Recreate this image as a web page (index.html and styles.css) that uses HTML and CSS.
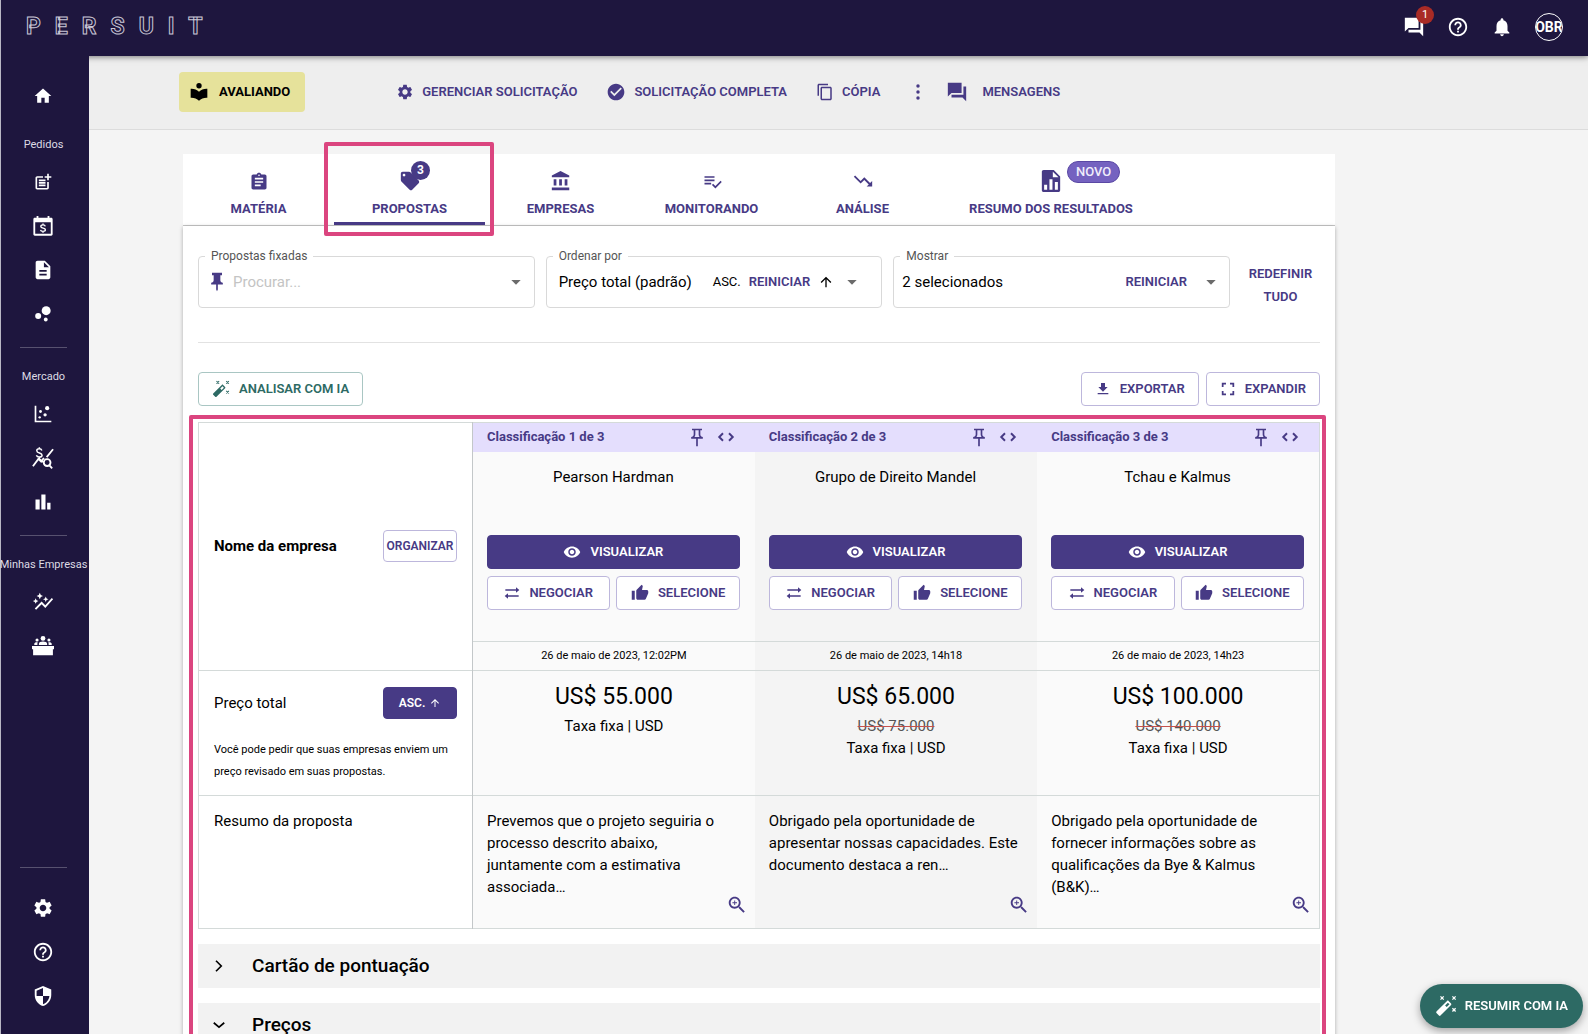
FILE: index.html
```html
<!DOCTYPE html>
<html lang="pt-BR">
<head>
<meta charset="utf-8">
<meta name="viewport" content="width=device-width, initial-scale=1">
<title>Propostas - PERSUIT</title>
<link rel="stylesheet" href="styles.css">
</head>
<body>
<svg class="sprite" aria-hidden="true">
  <symbol id="home" viewBox="0 0 24 24"><path d="M10 20v-6h4v6h5v-8h3L12 3 2 12h3v8z"/></symbol>
  <symbol id="post" viewBox="0 0 24 24"><path d="M17 19.22H5V7h7V5H5c-1.1 0-2 .9-2 2v12c0 1.1.9 2 2 2h12c1.1 0 2-.9 2-2v-7h-2v7.22zM19 2h-2v3h-3v2h3v3h2V7h3V5h-3V2zM7 9h8v2H7zM7 12h8v2H7zM7 15h8v2H7z"/></symbol>
  <symbol id="calendar" viewBox="0 0 24 24"><path d="M21 3h-2V1h-2v2H7V1H5v2H3c-.8 0-1.500.7-1.500 1.500V21c0 .8.7 1.500 1.500 1.500h18c.8 0 1.500-.7 1.500-1.500V4.500C22.500 3.700 21.800 3 21 3zm-.5 17.500h-17V8h17z"/><path fill="none" stroke="currentColor" stroke-width="1.500" d="M14.500 12.300c-.2-1-1.200-1.500-2.500-1.500s-2.400.6-2.400 1.700c0 2.600 5 1.200 5 3.600 0 1.200-1.200 1.700-2.600 1.700s-2.500-.6-2.700-1.700M12 9.300v1.500M12 17.700v1.600"/></symbol>
  <symbol id="doc" viewBox="0 0 24 24"><path d="M14 2H6c-1.100 0-2 .9-2 2v16c0 1.100.9 2 2 2h12c1.100 0 2-.9 2-2V8l-6-6zm2 16H8v-2h8v2zm0-4H8v-2h8v2zm-3-5V3.500L18.500 9H13z"/></symbol>
  <symbol id="bubbles" viewBox="0 0 24 24"><circle cx="6.200" cy="14.400" r="3.600"/><circle cx="15.300" cy="18.600" r="2.300"/><circle cx="15.800" cy="8" r="5.400"/></symbol>
  <symbol id="scatter" viewBox="0 0 24 24"><path d="M4 2H2v20h20v-2H4z"/><circle cx="9" cy="9" r="1.700"/><circle cx="17" cy="5" r="2.500"/><circle cx="14.500" cy="13" r="2"/><circle cx="8" cy="16" r="1.400"/></symbol>
  <symbol id="pricing" viewBox="0 0 24 24"><path fill="none" stroke="currentColor" stroke-width="2" d="M1 21l6-8 3 3 3-4M16 11l7-8.500"/><circle cx="16.500" cy="17" r="3.700" fill="none" stroke="currentColor" stroke-width="2"/><path fill="none" stroke="currentColor" stroke-width="2" d="M19 20l3 3.300"/><path fill="none" stroke="currentColor" stroke-width="1.600" d="M10.800 3.800C10.300 2.600 9.400 2 8 2 6.300 2 5.200 2.800 5.200 4c0 3.200 5.800 2 5.800 5 0 1.300-1.300 2-3 2s-2.800-.7-3.200-2M8 .2V2M8 11v2l5 4"/></symbol>
  <symbol id="bars" viewBox="0 0 24 24"><path d="M3 9h5v12H3zM17 13h4v8h-4zM10 3h5v18h-5z"/></symbol>
  <symbol id="autograph" viewBox="0 0 24 24"><path d="M14.060 9.940 12 9l2.060-.940L15 6l.940 2.060L18 9l-2.060.940L15 12zM4 14l.940-2.060L7 11l-2.060-.940L4 8l-.940 2.060L1 11l2.060.940zM8.500 9l1.090-2.410L12 5.500 9.590 4.410 8.500 2 7.410 4.410 5 5.500l2.410 1.090zM4.500 20.500l6-6.010 4 4L23 8.930l-1.410-1.410-7.090 7.970-4-4L3 19z"/></symbol>
  <symbol id="panel" viewBox="0 0 24 24"><circle cx="12" cy="3.800" r="2.600"/><circle cx="5.500" cy="5.500" r="1.700"/><circle cx="18.500" cy="5.500" r="1.700"/><path d="M7.500 11v-1.500c0-1.800 2-2.500 4.500-2.500s4.500.7 4.500 2.500V11zM2.500 11V9.600c0-1.200 1.300-1.900 3.800-1.700-.3.600-.4 1.100-.4 1.600V11zM21.500 11V9.600c0-1.200-1.300-1.900-3.800-1.700.3.600.4 1.100.4 1.600V11zM0 12h24v3.500h-1.200V22H1.200v-6.500H0z"/></symbol>
  <symbol id="gear" viewBox="0 0 24 24"><path d="M19.140 12.940c.04-.3.060-.61.060-.94 0-.32-.02-.64-.07-.94l2.030-1.580c.18-.14.230-.41.120-.61l-1.920-3.320c-.12-.22-.37-.29-.59-.22l-2.390.96c-.5-.38-1.030-.7-1.620-.94l-.36-2.540c-.04-.24-.24-.41-.48-.41h-3.840c-.24 0-.43.17-.47.41l-.36 2.540c-.59.24-1.130.57-1.620.94l-2.390-.96c-.22-.08-.47 0-.59.22L2.740 8.870c-.12.21-.08.47.12.61l2.030 1.580c-.05.3-.09.63-.09.94s.02.64.07.94l-2.030 1.580c-.18.14-.23.41-.12.61l1.920 3.320c.12.22.37.29.59.22l2.390-.96c.5.38 1.030.7 1.620.94l.36 2.540c.05.24.24.41.48.41h3.840c.24 0 .44-.17.47-.41l.36-2.540c.59-.24 1.130-.56 1.620-.94l2.390.96c.22.08.47 0 .59-.22l1.920-3.320c.12-.22.07-.47-.12-.61l-2.010-1.580zM12 15.600c-1.980 0-3.600-1.620-3.600-3.600s1.620-3.600 3.600-3.600 3.600 1.620 3.600 3.600-1.620 3.600-3.600 3.600z"/></symbol>
  <symbol id="help" viewBox="0 0 24 24"><path d="M11 18h2v-2h-2v2zm1-16C6.480 2 2 6.480 2 12s4.480 10 10 10 10-4.480 10-10S17.520 2 12 2zm0 18c-4.410 0-8-3.590-8-8s3.590-8 8-8 8 3.590 8 8-3.590 8-8 8zm0-14c-2.210 0-4 1.790-4 4h2c0-1.100.9-2 2-2s2 .9 2 2c0 2-3 1.750-3 5h2c0-2.250 3-2.500 3-5 0-2.210-1.790-4-4-4z"/></symbol>
  <symbol id="shield" viewBox="0 0 24 24"><path d="M12 1 3 5v6c0 5.550 3.840 10.740 9 12 5.160-1.260 9-6.450 9-12V5l-9-4zm0 11h7c-.53 4.120-3.280 7.790-7 8.940V12H5V6.300l7-3.110V12z"/></symbol>
  <symbol id="forum" viewBox="0 0 24 24"><path d="M22 6h-3v9H6v3h12l4 4zM17 2H2v15l4-4h11z"/></symbol>
  <symbol id="bell" viewBox="0 0 24 24"><path d="M12 22c1.100 0 2-.9 2-2h-4c0 1.100.9 2 2 2zm6-6v-5c0-3.070-1.640-5.640-4.500-6.320V4c0-.83-.67-1.500-1.500-1.500s-1.500.67-1.500 1.500v.68C7.630 5.360 6 7.920 6 11v5l-2 2v1h16v-1l-2-2z"/></symbol>
  <symbol id="reader" viewBox="0 0 24 24"><path d="M12 11.550C9.640 9.350 6.480 8 3 8H2v11h1c3.480 0 6.640 1.350 9 3.550 2.360-2.190 5.520-3.550 9-3.550h1V8h-1c-3.480 0-6.640 1.350-9 3.550z"/><circle cx="12" cy="4.500" r="3.200"/></symbol>
  <symbol id="checkcircle" viewBox="0 0 24 24"><path d="M12 2C6.480 2 2 6.480 2 12s4.480 10 10 10 10-4.480 10-10S17.520 2 12 2zm-2 15l-5-5 1.410-1.410L10 14.170l7.590-7.590L19 8l-9 9z"/></symbol>
  <symbol id="copy" viewBox="0 0 24 24"><path d="M16 1H4c-1.100 0-2 .9-2 2v14h2V3h12V1zm3 4H8c-1.100 0-2 .9-2 2v14c0 1.100.9 2 2 2h11c1.100 0 2-.9 2-2V7c0-1.100-.9-2-2-2zm0 16H8V7h11v14z"/></symbol>
  <symbol id="dots" viewBox="0 0 24 24"><circle cx="12" cy="4" r="2.300"/><circle cx="12" cy="12" r="2.300"/><circle cx="12" cy="20" r="2.300"/></symbol>
  <symbol id="clipboard" viewBox="0 0 24 24"><path d="M19 3h-4.180C14.400 1.840 13.300 1 12 1s-2.400.84-2.820 2H5c-1.100 0-2 .9-2 2v14c0 1.100.9 2 2 2h14c1.100 0 2-.9 2-2V5c0-1.100-.9-2-2-2zm-7 0c.55 0 1 .45 1 1s-.45 1-1 1-1-.45-1-1 .45-1 1-1zm2 14H7v-2h7v2zm3-4H7v-2h10v2zm0-4H7V7h10v2z"/></symbol>
  <symbol id="tag" viewBox="0 0 24 24"><path d="M21.410 11.580l-9-9C12.050 2.220 11.550 2 11 2H4c-1.100 0-2 .9-2 2v7c0 .55.22 1.050.59 1.420l9 9c.36.36.86.58 1.410.58s1.050-.22 1.410-.59l7-7c.37-.36.59-.86.59-1.410s-.23-1.060-.59-1.420zM5.500 7C4.670 7 4 6.330 4 5.500S4.670 4 5.500 4 7 4.670 7 5.500 6.330 7 5.500 7z"/></symbol>
  <symbol id="bank" viewBox="0 0 24 24"><path d="M4 10v7h3v-7H4zm6 0v7h3v-7h-3zM2 22h19v-3H2v3zm14-12v7h3v-7h-3zm-4.500-9L2 6v2h19V6l-9.500-5z"/></symbol>
  <symbol id="listcheck" viewBox="0 0 24 24"><path d="M3 5h12v2H3zM3 9h12v2H3zM3 13h8v2H3z"/><path d="M22.300 10.600l-6.200 6.200-2.800-2.700-1.400 1.400 4.200 4.200 7.600-7.700z"/></symbol>
  <symbol id="trend" viewBox="0 0 24 24"><path d="M16 18l2.290-2.290-4.880-4.880-4 4L2 7.410 3.410 6l6 6 4-4 6.300 6.290L22 12v6z"/></symbol>
  <symbol id="report" viewBox="0 0 24 24"><path fill-rule="evenodd" d="M4 0h11l7 7v15c0 1.100-.9 2-2 2H4c-1.100 0-2-.9-2-2V2C2 .9 2.900 0 4 0zm10 1.800V8h6.200zM4.500 16v5.500h3.300V16zM10.300 10v11.500h3.300V10zM16.200 13v8.500h3.300V13z"/></symbol>
  <symbol id="pin" viewBox="0 0 24 24"><path d="M16 10V4h2V1H6v3h2v6c0 1.700-1.300 2.500-3 3v2h6v6l1 2 1-2v-6h6v-2c-1.700-.5-3-1.300-3-3z"/></symbol>
  <symbol id="pinline" viewBox="0 0 24 24"><path d="M14 4v5c0 1.120.37 2.160 1 3H9c.65-.86 1-1.900 1-3V4h4m4-2H6v2h2v5c0 1.660-1.340 3-3 3v2h6v9h2v-9h6v-2c-1.660 0-3-1.340-3-3V4h2z"/></symbol>
  <symbol id="code" viewBox="0 0 24 24"><path fill="none" stroke="currentColor" stroke-width="2.600" d="M8 7l-5 5 5 5M16 7l5 5-5 5"/></symbol>
  <symbol id="caret" viewBox="0 0 24 24"><path d="M5 9l7 7 7-7z"/></symbol>
  <symbol id="up" viewBox="0 0 24 24"><path d="M4 12l1.410 1.410L11 7.830V20h2V7.830l5.580 5.590L20 12l-8-8z"/></symbol>
  <symbol id="wand" viewBox="0 0 24 24"><path fill-rule="evenodd" d="M14.800 6.500l2.700 2.700c.5.500.5 1.200 0 1.700L6 22.400c-.5.500-1.200.5-1.700 0l-2.700-2.700c-.5-.5-.5-1.200 0-1.700L13.100 6.500c.5-.5 1.200-.5 1.700 0zM14 8.400L11 11.400l1.800 1.800 3-3z"/><path fill="none" stroke="currentColor" stroke-width="1.400" d="M6 1.500l3.500 3.500M9.500 1.500L6 5M19 1.500L22.500 5M22.500 1.500L19 5M19 14.500l3.500 3.500M22.500 14.500L19 18"/></symbol>
  <symbol id="download" viewBox="0 0 24 24"><path d="M19 9h-4V3H9v6H5l7 7 7-7zM4 18v2h16v-2H4z"/></symbol>
  <symbol id="expand" viewBox="0 0 24 24"><path fill="none" stroke="currentColor" stroke-width="2.600" d="M4 9V4h5M15 4h5v5M20 15v5h-5M9 20H4v-5"/></symbol>
  <symbol id="eye" viewBox="0 0 24 24"><path d="M12 4.500C7 4.500 2.730 7.610 1 12c1.730 4.390 6 7.500 11 7.500s9.270-3.110 11-7.500c-1.730-4.390-6-7.500-11-7.500zM12 17c-2.760 0-5-2.240-5-5s2.240-5 5-5 5 2.240 5 5-2.240 5-5 5zm0-8c-1.660 0-3 1.340-3 3s1.340 3 3 3 3-1.340 3-3-1.340-3-3-3z"/></symbol>
  <symbol id="swap" viewBox="0 0 24 24"><path d="M2 6.500h16V3.200l5 4.300-5 4.300V8.500H2zM22 15.500H6v-3.300l-5 4.300 5 4.300v-3.300h16z"/></symbol>
  <symbol id="thumb" viewBox="0 0 24 24"><path d="M1 21h4V9H1v12zm22-11c0-1.100-.9-2-2-2h-6.310l.95-4.570.03-.32c0-.41-.17-.79-.44-1.060L14.170 1 7.590 7.590C7.220 7.950 7 8.450 7 9v10c0 1.100.9 2 2 2h9c.83 0 1.540-.5 1.840-1.220l3.020-7.050c.09-.23.14-.47.14-.73v-2z"/></symbol>
  <symbol id="zoom" viewBox="0 0 24 24"><path d="M15.500 14h-.79l-.28-.27C15.410 12.590 16 11.110 16 9.500 16 5.910 13.090 3 9.500 3S3 5.910 3 9.500 5.910 16 9.500 16c1.610 0 3.090-.59 4.230-1.570l.27.28v.79l5 4.990L20.490 19l-4.990-5zm-6 0C7.010 14 5 11.990 5 9.500S7.010 5 9.500 5 14 7.010 14 9.500 11.990 14 9.500 14zM12 10h-2v2H9v-2H7V9h2V7h1v2h2v1z"/></symbol>
  <symbol id="right" viewBox="0 0 24 24"><path fill="none" stroke="currentColor" stroke-width="2.200" d="M8 5l7 7-7 7"/></symbol>
  <symbol id="down" viewBox="0 0 24 24"><path fill="none" stroke="currentColor" stroke-width="2.200" d="M5 9l7 6 7-6"/></symbol>
</svg>

<div class="app">
  <header class="topbar">
    <a class="logo" href="#">PERSUIT</a>
    <div class="topbar-tools">
      <button class="tool" type="button" aria-label="Mensagens"><svg class="i22"><use href="#forum"/></svg><span class="alert">1</span></button>
      <button class="tool" type="button" aria-label="Ajuda"><svg class="i22"><use href="#help"/></svg></button>
      <button class="tool" type="button" aria-label="Notificações"><svg class="i22"><use href="#bell"/></svg></button>
      <button class="avatar" type="button">OBR</button>
    </div>
  </header>

  <nav class="sidebar" aria-label="Principal">
    <a class="side-link" href="#" aria-label="Início"><svg class="i20"><use href="#home"/></svg></a>
    <p class="side-title">Pedidos</p>
    <a class="side-link" href="#" aria-label="Novo pedido"><svg class="i20"><use href="#post"/></svg></a>
    <a class="side-link" href="#" aria-label="Tarifas"><svg class="i22"><use href="#calendar"/></svg></a>
    <a class="side-link" href="#" aria-label="Documentos"><svg class="i22"><use href="#doc"/></svg></a>
    <a class="side-link" href="#" aria-label="Grupos"><svg class="i20"><use href="#bubbles"/></svg></a>
    <hr class="side-rule">
    <p class="side-title">Mercado</p>
    <a class="side-link" href="#" aria-label="Dispersão"><svg class="i20"><use href="#scatter"/></svg></a>
    <a class="side-link" href="#" aria-label="Preços de mercado"><svg class="i22"><use href="#pricing"/></svg></a>
    <a class="side-link" href="#" aria-label="Indicadores"><svg class="i20"><use href="#bars"/></svg></a>
    <hr class="side-rule">
    <p class="side-title">Minhas Empresas</p>
    <a class="side-link" href="#" aria-label="Tendências"><svg class="i22"><use href="#autograph"/></svg></a>
    <a class="side-link" href="#" aria-label="Painel"><svg class="i22"><use href="#panel"/></svg></a>
    <div class="side-foot">
      <hr class="side-rule">
      <a class="side-link" href="#" aria-label="Configurações"><svg class="i22"><use href="#gear"/></svg></a>
      <a class="side-link" href="#" aria-label="Ajuda"><svg class="i22"><use href="#help"/></svg></a>
      <a class="side-link" href="#" aria-label="Segurança"><svg class="i22"><use href="#shield"/></svg></a>
    </div>
  </nav>

  <main class="main">
    <div class="actions">
      <span class="status"><svg class="i20"><use href="#reader"/></svg>AVALIANDO</span>
      <div class="action-list">
        <button class="action" type="button"><svg class="i18"><use href="#gear"/></svg>GERENCIAR SOLICITAÇÃO</button>
        <button class="action" type="button"><svg class="i20"><use href="#checkcircle"/></svg>SOLICITAÇÃO COMPLETA</button>
        <button class="action" type="button"><svg class="i18"><use href="#copy"/></svg>CÓPIA</button>
        <button class="action" type="button" aria-label="Mais"><svg class="i18"><use href="#dots"/></svg></button>
        <button class="action action-wide" type="button"><svg class="i22"><use href="#forum"/></svg>MENSAGENS</button>
      </div>
    </div>

    <div class="content">
      <nav class="tabs" aria-label="Seções">
        <a class="tab" href="#"><svg class="i20"><use href="#clipboard"/></svg>MATÉRIA</a>
        <a class="tab tab-active" href="#" aria-current="page"><svg class="i22"><use href="#tag"/></svg>PROPOSTAS<span class="count">3</span></a>
        <a class="tab" href="#"><svg class="i22"><use href="#bank"/></svg>EMPRESAS</a>
        <a class="tab" href="#"><svg class="i20"><use href="#listcheck"/></svg>MONITORANDO</a>
        <a class="tab" href="#"><svg class="i22"><use href="#trend"/></svg>ANÁLISE</a>
        <a class="tab tab-wide" href="#"><svg class="i22"><use href="#report"/></svg>RESUMO DOS RESULTADOS<span class="new">NOVO</span></a>
      </nav>

      <section class="card">
        <div class="filters">
          <fieldset class="field">
            <legend><label for="pinned">Propostas fixadas</label></legend>
            <div class="field-row field-search">
              <svg class="i20 purple"><use href="#pin"/></svg>
              <input id="pinned" class="control" type="text" placeholder="Procurar...">
              <svg class="i16 grey"><use href="#caret"/></svg>
            </div>
          </fieldset>
          <fieldset class="field">
            <legend><label for="sort">Ordenar por</label></legend>
            <div class="field-row field-sort">
              <select id="sort" class="control"><option>Preço total (padrão)</option></select>
              <span class="order">ASC.</span>
              <button class="link" type="button">REINICIAR</button>
              <svg class="i16"><use href="#up"/></svg>
              <svg class="i16 grey"><use href="#caret"/></svg>
            </div>
          </fieldset>
          <fieldset class="field">
            <legend><label for="show">Mostrar</label></legend>
            <div class="field-row field-show">
              <select id="show" class="control"><option>2 selecionados</option></select>
              <button class="link" type="button">REINICIAR</button>
              <svg class="i16 grey"><use href="#caret"/></svg>
            </div>
          </fieldset>
          <button class="link reset" type="button">REDEFINIR TUDO</button>
        </div>

        <hr class="rule">

        <div class="toolbar">
          <button class="btn btn-teal" type="button"><svg class="i18"><use href="#wand"/></svg>ANALISAR COM IA</button>
          <button class="btn btn-tool" type="button"><svg class="i16"><use href="#download"/></svg>EXPORTAR</button>
          <button class="btn btn-tool" type="button"><svg class="i16"><use href="#expand"/></svg>EXPANDIR</button>
        </div>

        <div class="highlight">
          <table class="compare">
            <colgroup><col class="col-head"><col><col><col></colgroup>
            <tbody>
              <tr>
                <th class="rowhead rowhead-name" scope="row">
                  <div class="rowhead-line"><strong>Nome da empresa</strong><button class="btn btn-small" type="button">ORGANIZAR</button></div>
                </th>
                <td>
                  <div class="rank"><span>Classificação 1 de 3</span><button class="mini" type="button" aria-label="Fixar"><svg class="i20"><use href="#pinline"/></svg></button><button class="mini" type="button" aria-label="Mover"><svg class="i18"><use href="#code"/></svg></button></div>
                  <div class="firm">
                    <p class="firm-name">Pearson Hardman</p>
                    <button class="btn btn-solid" type="button"><svg class="i18"><use href="#eye"/></svg>VISUALIZAR</button>
                    <button class="btn" type="button"><svg class="i16"><use href="#swap"/></svg>NEGOCIAR</button>
                    <button class="btn" type="button"><svg class="i18"><use href="#thumb"/></svg>SELECIONE</button>
                  </div>
                  <p class="date">26 de maio de 2023, 12:02PM</p>
                </td>
                <td class="alt">
                  <div class="rank"><span>Classificação 2 de 3</span><button class="mini" type="button" aria-label="Fixar"><svg class="i20"><use href="#pinline"/></svg></button><button class="mini" type="button" aria-label="Mover"><svg class="i18"><use href="#code"/></svg></button></div>
                  <div class="firm">
                    <p class="firm-name">Grupo de Direito Mandel</p>
                    <button class="btn btn-solid" type="button"><svg class="i18"><use href="#eye"/></svg>VISUALIZAR</button>
                    <button class="btn" type="button"><svg class="i16"><use href="#swap"/></svg>NEGOCIAR</button>
                    <button class="btn" type="button"><svg class="i18"><use href="#thumb"/></svg>SELECIONE</button>
                  </div>
                  <p class="date">26 de maio de 2023, 14h18</p>
                </td>
                <td>
                  <div class="rank"><span>Classificação 3 de 3</span><button class="mini" type="button" aria-label="Fixar"><svg class="i20"><use href="#pinline"/></svg></button><button class="mini" type="button" aria-label="Mover"><svg class="i18"><use href="#code"/></svg></button></div>
                  <div class="firm">
                    <p class="firm-name">Tchau e Kalmus</p>
                    <button class="btn btn-solid" type="button"><svg class="i18"><use href="#eye"/></svg>VISUALIZAR</button>
                    <button class="btn" type="button"><svg class="i16"><use href="#swap"/></svg>NEGOCIAR</button>
                    <button class="btn" type="button"><svg class="i18"><use href="#thumb"/></svg>SELECIONE</button>
                  </div>
                  <p class="date">26 de maio de 2023, 14h23</p>
                </td>
              </tr>
              <tr>
                <th class="rowhead rowhead-price" scope="row">
                  <div class="rowhead-line">Preço total<button class="btn btn-small btn-solid" type="button">ASC. <svg class="i12"><use href="#up"/></svg></button></div>
                  <p class="note">Você pode pedir que suas empresas enviem um preço revisado em suas propostas.</p>
                </th>
                <td class="price"><p class="amount">US$ 55.000</p><p>Taxa fixa | USD</p></td>
                <td class="price alt"><p class="amount">US$ 65.000</p><p><del>US$ 75.000</del></p><p>Taxa fixa | USD</p></td>
                <td class="price"><p class="amount">US$ 100.000</p><p><del>US$ 140.000</del></p><p>Taxa fixa | USD</p></td>
              </tr>
              <tr>
                <th class="rowhead" scope="row">Resumo da proposta</th>
                <td class="summary"><p>Prevemos que o projeto seguiria o processo descrito abaixo,<br>juntamente com a estimativa associada…</p><button class="mini zoom" type="button" aria-label="Ampliar"><svg class="i22"><use href="#zoom"/></svg></button></td>
                <td class="summary alt"><p>Obrigado pela oportunidade de apresentar nossas capacidades. Este documento destaca a ren…</p><button class="mini zoom" type="button" aria-label="Ampliar"><svg class="i22"><use href="#zoom"/></svg></button></td>
                <td class="summary"><p>Obrigado pela oportunidade de fornecer informações sobre as qualificações da Bye &amp; Kalmus (B&amp;K)…</p><button class="mini zoom" type="button" aria-label="Ampliar"><svg class="i22"><use href="#zoom"/></svg></button></td>
              </tr>
            </tbody>
          </table>
          <button class="accordion" type="button" aria-expanded="false"><svg class="i18"><use href="#right"/></svg>Cartão de pontuação</button>
          <button class="accordion" type="button" aria-expanded="true"><svg class="i18"><use href="#down"/></svg>Preços</button>
        </div>
      </section>
    </div>
  </main>
</div>
<button class="fab" type="button"><svg class="i22"><use href="#wand"/></svg>RESUMIR COM IA</button>
</body>
</html>
```
FILE: styles.css
```css
:root {
  --navy: #1e163e;
  --purple: #473a85;
  --teal: #2d6a64;
  --pink: #db457f;
  --line: #d4dad9;
}

* { box-sizing: border-box; }

body {
  margin: 0;
  background: #f4f4f4;
  color: #000;
  font-family: Roboto, sans-serif;
  font-size: 15px;
  line-height: 22px;
}

p { margin: 0; }
a { color: inherit; text-decoration: none; }
button { font: inherit; color: inherit; cursor: pointer; }
svg { display: block; flex: none; fill: currentColor; }

.sprite { display: none; }
.i12 { width: 12px; height: 12px; }
.i16 { width: 16px; height: 16px; }
.i18 { width: 18px; height: 18px; }
.i20 { width: 20px; height: 20px; }
.i22 { width: 22px; height: 22px; }
.purple { color: var(--purple); }
.grey { color: #6b6b6b; }

/* Shell */
.app {
  display: grid;
  grid-template: 56px 1fr / 89px 1fr;
  height: 100vh;
}

.topbar {
  grid-column: 1 / -1;
  display: flex;
  align-items: center;
  justify-content: space-between;
  padding: 0 25px 2px;
  border-left: 1px solid #b9b7c4;
  background: var(--navy);
  color: #fff;
  box-shadow: 0 1px 6px rgba(0, 0, 0, .5);
  z-index: 1;
}

.logo {
  font-size: 23px;
  font-weight: 700;
  line-height: 24px;
  letter-spacing: 14px;
  color: var(--navy);
  -webkit-text-stroke: 1px #c9c6d6;
}

.topbar-tools { display: flex; align-items: center; gap: 22px; }
.tool { position: relative; padding: 0; border: 0; background: none; }
.alert {
  position: absolute;
  top: -10px;
  right: -9px;
  width: 18px;
  border-radius: 9px;
  background: #a92b25;
  font-size: 11px;
  line-height: 18px;
  text-align: center;
}
.avatar {
  display: flex;
  align-items: center;
  justify-content: center;
  width: 28px;
  height: 28px;
  padding: 0;
  border: 1px solid #fff;
  border-radius: 50%;
  background: none;
  font-size: 14px;
  font-weight: 700;
  overflow: hidden;
}

.sidebar {
  display: flex;
  flex-direction: column;
  padding: 18px 3px 16px 0;
  border-left: 1px solid #b9b7c4;
  background: var(--navy);
  color: #fff;
  z-index: 2;
}
.side-link {
  display: flex;
  flex: none;
  align-items: center;
  justify-content: center;
  height: 44px;
  padding-right: 1px;
}
.side-title {
  display: flex;
  justify-content: center;
  margin: 18px 0 7px;
  color: #dddbe4;
  font-size: 11px;
  line-height: 17px;
  white-space: nowrap;
}
.side-rule { width: 47px; margin: 11px auto 2px; border: 0; border-top: 1px solid #57516f; }
.side-foot { margin-top: auto; }
.side-foot .side-rule { margin-bottom: 18px; }

.main { min-width: 0; overflow: hidden; }

/* Request actions */
.actions {
  display: flex;
  align-items: center;
  height: 74px;
  padding: 0 90px 2px;
  border-bottom: 1px solid #dcdcdc;
  background: #eee;
}
.status {
  display: flex;
  align-items: center;
  gap: 10px;
  height: 40px;
  padding: 0 15px 0 10px;
  border-radius: 4px;
  background: #e6e29b;
  font-size: 13px;
  font-weight: 700;
}
.action-list { display: flex; align-items: center; gap: 29px; margin-left: 91px; color: var(--purple); }
.action {
  display: flex;
  align-items: center;
  gap: 8px;
  padding: 0;
  border: 0;
  background: none;
  font-size: 13px;
  font-weight: 600;
}
.action-wide { gap: 14px; margin-left: -10px; }

/* Tabs */
.content { max-width: 1152px; margin: 24px 0 0 94px; }
.tabs { display: flex; border-bottom: 1px solid #c8c8c8; background: #fff; color: var(--purple); }
.tab {
  position: relative;
  display: flex;
  flex: 0 0 151px;
  flex-direction: column;
  align-items: center;
  justify-content: flex-end;
  gap: 6px;
  height: 71px;
  padding-bottom: 5px;
  font-size: 13px;
  font-weight: 700;
}
.tab-wide { flex-basis: 226px; }
.tab-active { border-bottom: 3px solid var(--purple); padding-bottom: 2px; }
.tab-active::after {
  content: "";
  position: absolute;
  inset: -12px -9px -14px -10px;
  border: 4px solid var(--pink);
  border-radius: 2px;
  z-index: 1;
}
.count {
  position: absolute;
  top: 7px;
  left: 77px;
  width: 19px;
  border-radius: 10px;
  background: var(--purple);
  color: #fff;
  font-size: 12px;
  line-height: 19px;
  text-align: center;
}
.new {
  position: absolute;
  top: 7px;
  left: 129px;
  padding: 0 8px;
  border: 1px solid #5a48a4;
  border-radius: 11px;
  background: #7562c0;
  color: #f0edfb;
  font-size: 13px;
  font-weight: 500;
  line-height: 20px;
}

/* Card */
.card { padding: 22px 15px 0; background: #fff; box-shadow: 0 1px 4px rgba(0, 0, 0, .3); }
.filters { display: grid; grid-template-columns: 1fr 1fr 1fr 79px; gap: 11px; align-items: center; }
.field {
  min-width: 0;
  margin: 0;
  padding: 0 10px 0 8px;
  border: 1px solid #d9d9d9;
  border-radius: 4px;
}
.field legend { margin-left: -2px; padding: 0 6px; color: #555; font-size: 12px; line-height: 16px; }
.field:first-child legend { margin-left: -2px; }
.field-row { display: flex; align-items: center; gap: 8px; height: 43px; padding-bottom: 7px; }
.field-search { gap: 6px; }
.field-sort { padding-left: 4px; }
.control {
  flex: 1;
  min-width: 0;
  padding: 0;
  border: 0;
  outline: 0;
  background: none;
  color: #000;
  font: inherit;
  appearance: none;
}
.field-sort .control { flex: none; margin-right: 12px; }
.field-sort .link + svg + svg { margin-left: 2px; }
.field-show .link { margin-right: 8px; }
.control::placeholder { color: #c4c4c4; opacity: 1; }
.order { font-size: 13px; }
.link { padding: 0; border: 0; background: none; color: var(--purple); font-size: 13px; font-weight: 600; }
.reset { line-height: 23px; padding-top: 13px; }
.rule { margin: 34px 0 29px; border: 0; border-top: 1px solid #e2e2e2; }

.btn {
  display: inline-flex;
  align-items: center;
  justify-content: center;
  gap: 9px;
  height: 34px;
  padding: 0 8px;
  border: 1px solid #bdb7dc;
  border-radius: 4px;
  background: #fff;
  color: var(--purple);
  font-size: 13px;
  font-weight: 600;
}
.btn-solid { border-color: var(--purple); background: var(--purple); color: #fff; }
.btn-teal { margin-right: auto; padding: 0 13px; border-color: #a9c6c3; color: var(--teal); }
.btn-tool { padding: 0 13px; }
.btn-small { width: 74px; height: 32px; padding: 0; gap: 4px; font-size: 12px; }
.toolbar { display: flex; gap: 7px; margin-bottom: 9px; }

/* Comparison */
.highlight {
  margin: 0 -6px 0 -9px;
  padding: 3px 2px 40px 5px;
  border: 4px solid var(--pink);
  border-radius: 2px;
}
.compare {
  width: 100%;
  margin-bottom: 15px;
  border: 1px solid var(--line);
  border-collapse: collapse;
  table-layout: fixed;
}
.col-head { width: 274px; }
.compare tr { border-bottom: 1px solid var(--line); }
.compare td { padding: 0; background: #fafafa; vertical-align: top; }
.compare .alt { background: #f4f4f4; }
.rowhead {
  padding: 14px 15px 12px;
  border-right: 1px solid #c3c7c9;
  font-weight: 400;
  text-align: left;
  vertical-align: top;
}
.rowhead-name { padding-bottom: 16px; vertical-align: middle; }
.rowhead-price { padding-top: 16px; }
.rowhead-line { display: flex; align-items: center; justify-content: space-between; }
.note { margin-top: 20px; font-size: 11px; }
.rank {
  display: flex;
  align-items: center;
  gap: 10px;
  height: 29px;
  padding: 0 20px 2px 14px;
  background: #e4defd;
  color: var(--purple);
  font-size: 13px;
  font-weight: 700;
}
.rank span { flex: 1; }
.mini { padding: 0; border: 0; background: none; color: var(--purple); }
.firm {
  display: grid;
  grid-template-columns: repeat(2, minmax(0, 1fr));
  gap: 7px 6px;
  padding: 14px 15px 31px 14px;
}
.firm-name { grid-column: 1 / -1; height: 62px; text-align: center; }
.firm .btn-solid { grid-column: 1 / -1; }
.date { border-top: 1px solid var(--line); font-size: 11px; line-height: 28px; text-align: center; }
.compare .price { padding-top: 10px; text-align: center; }
.amount { margin-bottom: 2px; font-size: 23px; line-height: 32px; }
del { color: #555; text-decoration-color: #c4524e; }
.compare .summary { padding: 14px 14px 12px; }
.summary p { min-height: 88px; }
.zoom { display: block; margin: -4px -7px 0 auto; }

.accordion {
  display: flex;
  align-items: center;
  gap: 24px;
  width: 100%;
  height: 44px;
  margin-bottom: 15px;
  padding: 0 12px;
  border: 0;
  background: #f2f2f2;
  font-size: 19px;
  font-weight: 500;
}

.fab {
  position: fixed;
  right: 5px;
  bottom: 6px;
  display: flex;
  align-items: center;
  gap: 8px;
  height: 44px;
  padding: 0 15px;
  border: 0;
  border-radius: 22px;
  background: var(--teal);
  color: #fff;
  font-size: 13px;
  font-weight: 600;
  box-shadow: 0 3px 8px rgba(0, 0, 0, .35);
  z-index: 3;
}
```
